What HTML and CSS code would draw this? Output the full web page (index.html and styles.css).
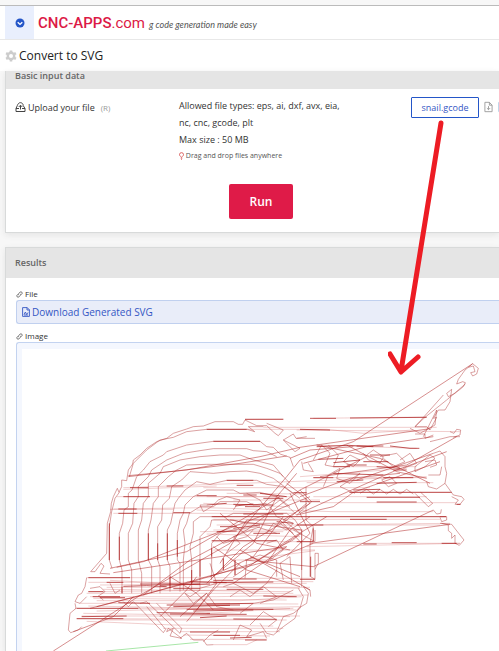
FILE: index.html
```
<!DOCTYPE html>
<html lang="en">
<head>
    <meta charset="UTF-8">
    <meta name="viewport" content="width=device-width, initial-scale=1.0">
    <title>Convert to SVG - CNC-APPS.com</title>
    <link rel="stylesheet" href="styles.css">
</head>
<body>
<header class="topbar">
    <button class="menu-button" type="button" aria-label="Open menu">
        <svg class="menu-icon" viewBox="0 0 10 10"><circle cx="5" cy="5" r="4.5" fill="#2456c8"/><path d="M2.7 4.2 5 6.4 7.3 4.2" fill="none" stroke="#fff" stroke-width="1.4"/></svg>
    </button>
    <a class="logo" href="#"><b>CNC-APPS</b>.com</a>
    <span class="slogan">g code generation made easy</span>
</header>
<div class="title-bar">
    <svg class="gear" viewBox="0 0 12 12"><circle cx="6" cy="6" r="3.2" fill="none" stroke="#ccc" stroke-width="2.4"/><path d="M6 .4v2M6 9.6v2M1.1 3.2l1.8 1M9.1 7.8l1.8 1M1.1 8.8l1.8-1M9.1 4.2l1.8-1" stroke="#ccc" stroke-width="2.6"/></svg>
    <h1>Convert to SVG</h1>
</div>

<main>
    <section class="panel input-panel">
        <h2 class="panel-head">Basic input data</h2>
        <div class="panel-body">
            <div class="upload-row">
                <div class="upload-label">
                    <svg class="upload-icon" viewBox="0 0 11 10"><path d="M1 6.5 2.4 3.4C3 1.3 5-.2 7 1.2c1 .7 1.2 1.4 1.1 2.2L10 6.5v3H1v-3h3M10 6.5H7M5.5 7.5v-4M3.7 5l1.8-1.8L7.3 5" fill="none" stroke="#444"/></svg>
                    Upload your file <small>(R)</small>
                </div>
                <div class="upload-info">
                    <p>Allowed file types: eps, ai, dxf, avx, eia, nc, cnc, gcode, plt</p>
                    <p>Max size : 50 MB</p>
                    <p class="hint"><svg class="pin" viewBox="0 0 6 9"><path d="M3 6C1.5 4.8.6 4 .6 2.7a2.4 2.2 0 0 1 4.8 0C5.4 4 4.5 4.8 3 6ZM2 7h2M2.4 8.4h1.2" fill="none" stroke="#d33a3a" stroke-width=".9"/></svg> Drag and drop files anywhere</p>
                </div>
                <div class="upload-file">
                    <button class="file-button" type="button">snail.gcode</button>
                    <svg class="doc-icon" viewBox="0 0 10 12"><path d="M1 .8h5L9 4v7.2H1ZM6 .8V4h3M5 5v4M3.2 7.2 5 9l1.8-1.8" fill="none" stroke="#999"/></svg>
                    <svg class="doc-icon" viewBox="0 0 10 12"><path d="M1 .8h8v10.4H1Z" fill="none" stroke="#8db2d8"/></svg>
                </div>
            </div>
            <button class="run-button" type="button">Run</button>
        </div>
    </section>

    <section class="panel">
        <h2 class="panel-head results-head">Results</h2>
        <div class="results">
            <h3><svg class="link-icon" viewBox="0 0 8 8"><path d="M3.2 4.8a1.4 1.4 0 0 1 0-2L4.7 1.2a1.5 1.5 0 0 1 2.1 2.1L5.9 4.2M4.8 3.2a1.4 1.4 0 0 1 0 2L3.3 6.8a1.5 1.5 0 0 1-2.1-2.1l.9-.9" fill="none" stroke="#555" stroke-width=".9"/></svg>File</h3>
            <a class="download" href="#">
                <svg class="svg-icon" viewBox="0 0 8 10"><path d="M.6.6h4.6l2.2 2.2v6.6H.6ZM5 .6V3h2.4M2 7.5 3.4 5l1.2 2.5L6 5.5M2 8h4" fill="none" stroke="#3557c4" stroke-width=".9"/></svg>
                Download Generated SVG
            </a>
            <h3><svg class="link-icon" viewBox="0 0 8 8"><path d="M3.2 4.8a1.4 1.4 0 0 1 0-2L4.7 1.2a1.5 1.5 0 0 1 2.1 2.1L5.9 4.2M4.8 3.2a1.4 1.4 0 0 1 0 2L3.3 6.8a1.5 1.5 0 0 1-2.1-2.1l.9-.9" fill="none" stroke="#555" stroke-width=".9"/></svg>Image</h3>
            <div class="image-frame">
                <svg class="drawing" viewBox="66 57 1431 906" role="img" aria-label="Toolpath of snail.gcode">
                    <!-- shell contours -->
                    <g class="contour">
                        <path d="M340 500 352 475 357 487 365 470 365 450 380 452 385 420 398 402 400 390 420 375 440 355 470 335 500 325 520 310 560 297 580 290 610 288 645 275H700L715 283H728L735 270 770 287H800L825 310 835 317 850 300 800 280M340 500 334 520 332 545 322 580 320 670 272 725H285L303 700 312 708 300 730 330 732"/>
                        <path d="M336 715 328 690V590L335 545 345 505 358 487M388 440 400 400 440 360 480 330 520 322 560 305 620 298H742L764 305 745 290H790"/>
                        <path d="M366 790V720L358 690V610L368 580 372 540 385 530V490L396 480 410 440 430 420 450 395 490 375 500 365 560 345 640 334H780L800 350 820 352 840 372 870 382 880 410"/>
                        <path d="M395 790V720L385 690V610L398 580 402 520 415 500V470L445 440 455 420 500 390 550 370 600 362 640 356H740L760 362 800 365 830 380"/>
                        <path d="M425 790V730L415 690V600L425 570 430 520 445 500V460L480 430 490 410 540 390 600 380 660 375H720L760 390 820 405 850 440"/>
                        <path d="M455 790V710L445 690V600L453 570 460 520 475 500V470L505 440 530 420 560 405 620 403H760L800 415 840 430 870 460"/>
                        <path d="M480 790V710L473 690V590L485 570 488 525 508 505 515 470 545 450 570 425 640 430 690 425 740 423 780 430 820 445 880 490"/>
                        <path d="M510 785V710L502 690V600L512 580 525 520 535 505 555 480 590 455 630 463 680 451H770L800 463 850 470 900 505"/>
                        <path d="M540 785V700L532 690V610L540 570 550 550 555 525 580 500 620 480H700L720 490 780 487 830 500 870 530"/>
                        <path d="M550 780V690L555 640 550 600 560 580 568 550 600 530H640L660 515H740L760 525 800 520"/>
                        <path d="M575 780V690L570 650 580 610V575L600 560H680L700 550H860L885 570 905 600V720"/>
                        <path d="M600 780V620L630 590 635 570H700L735 580H840L880 610M635 750V640L660 610 700 600 770 590 830 610M670 720V685M705 735V690M735 745 740 690 780 675 830 690V740M850 750 840 700 870 680 875 760M905 770V600M930 740V640L940 590 918 570V470M945 600V635L880 600M932 740 945 748V670H955V700L945 718"/>
                    </g>
                    <!-- antenna and right edge -->
                    <g class="contour">
                        <path d="M1405 112 1418 101 1435 115 1430 132 1418 138 1412 128 1425 125 1420 108 1405 112 1395 120 1375 148 1370 162 1388 155 1396 158 1390 170 1365 190 1345 200 1340 190 1355 178 1350 215 1335 240 1315 240 1300 265 1310 262 1290 300 1280 290 1245 290 1275 262 1340 210 1396 162M1245 290 1290 240 1330 195M1270 320 1310 240 1305 285 1260 310 1230 295M1245 312H1275V325L1300 315"/>
                        <path d="M1380 320H1350L1290 335M1350 305 1362 310 1370 298 1382 300 1380 315 1360 322M1300 370 1320 363 1335 380V410L1340 430 1335 460 1310 477 1285 470 1280 455M1245 410 1290 375 1305 385 1275 410 1245 425ZM1275 395 1305 390 1310 405 1290 412M1285 435H1320L1325 410M1335 460 1360 495 1385 500 1392 508 1380 523H1365L1375 510 1355 500M1245 490 1285 530 1298 520 1262 487M1300 540 1310 552 1322 550 1324 538M1320 562 1325 575 1340 570V560H1320M1320 580 1355 583 1380 615 1392 630 1378 646 1365 640V615L1355 625V610L1345 602V585L1325 580"/>
                        <path d="M850 330 880 312 888 325H945M850 330 885 365 900 355 870 340ZM890 325 920 320M905 395 910 420 940 425 925 400M940 390 965 345 990 370 975 405 1000 410 1015 375 985 345M970 470 985 435 1020 415 1010 445 1050 460 1080 430 1020 470 1065 490M1100 375 1120 360 1150 380 1140 400 1105 390 1090 370M1140 380 1190 370 1215 395 1180 410 1150 385M1200 390 1230 370 1250 400 1210 415M1050 375 1080 390 1060 410 1030 395ZM1145 450 1170 440 1190 460 1165 470ZM1080 490 1100 478 1120 492 1140 478 1160 492 1180 478 1200 492 1220 478 1240 492"/>
                    </g>
                    <!-- long horizontal moves -->
                    <g class="light">
                        <path d="M735 268 850 267M940 265 1280 261M790 292 1310 292M740 298H980L1090 310 1240 300M890 300 1380 305M610 473H1110M370 473 1280 440M350 500H880M370 478 650 468M340 537 620 533 1000 545H1300M340 550H880M330 538H520M640 560H1340M640 568H1320M650 585H1320M900 585 1350 580M940 640 1380 640M920 650 1380 640M1050 487H1350M940 500H1280M960 518H1370M940 443H1280M920 458H1300M1000 410H1250M950 345 1250 355M900 440 1220 415M635 635H940M600 605H850M620 612 900 620M640 660 945 660M690 690H820M750 688 945 662M700 745H945M260 743H700M265 757H650M300 765 920 760M320 772H930M265 785 720 780M260 790H880M310 778 870 785"/>
                        <path d="M270 800H650L925 795M280 805 860 810M290 812H720L905 800M240 820H690M265 828 890 840M225 835H870M290 843 900 830M250 850 870 860M245 858H900M230 866 780 868M310 870 860 870M260 874 520 885 820 888M490 895H850M540 905H840M550 915 810 918M570 928H800M640 944H740L770 930M620 850 880 835M520 820 895 822M560 755H940M610 520 860 530M620 500H860M680 490 920 492M700 510H960M590 540 760 545M640 600H910M650 770 900 775M330 751 600 765"/>
                    </g>
                    <g class="strong">
                        <path d="M735 268H850M930 265H1008M1050 264 1280 262M620 298H740M900 298 990 300M640 334H780M680 451H760M390 473H445M500 468H550M710 466H760M370 500H450M590 497H650M355 537H410M355 550H412M520 548H570M700 523 820 525M735 530H780M705 528 760 522M635 560H1338M730 552H850M1050 568H1160M890 585H970M635 632H830M890 635H940M1090 642H1130M1175 638H1250M1325 640H1370M1048 487H1355M1130 516H1250M1100 502H1260M940 443H1000M1150 443H1240M1000 410H1050M1090 395H1165M1230 355H1258M1070 348H1150M1180 420H1220M1370 523H1382"/>
                        <path d="M265 743H390M320 757H370M370 769 440 767 500 770M420 762H600M480 766 630 762M570 755 680 758M640 758 820 756M265 785H310M278 800H360M300 803 375 803M355 818 450 820M230 835H415M500 825H720M520 830 690 826M470 848 630 850M510 852 740 853M560 838H820M580 843 760 840M620 822 760 820M600 863 680 858M245 860 380 858M230 866H370M700 867 830 868M570 906H690M640 916H720M690 924 755 922M735 930H800M700 747H770M640 751H700M790 798 890 800M520 776H600M680 778H790M900 748H945"/>
                        <path d="M328 690V580M366 790V770M445 690V610M473 690V640M502 690V610M532 680V630M600 740V690M670 720V685M705 735V690M932 740V680M940 635V595M635 680V655M358 690V620M575 760V720M510 775V740"/>
                    </g>
                    <!-- rapid moves across the figure -->
                    <g class="cross">
                        <path d="M1418 101 1060 335 900 390 860 440 690 640 430 790 160 963M1300 540 940 710M930 640 1350 583M385 437 560 420 780 380 900 352 1290 296M385 440 720 400 860 378M330 715 560 665 690 590 840 500M340 728 660 680 860 650M350 712 430 695 620 620 780 560 930 500M430 795 570 690 740 600 900 480 1100 380M270 835 430 795 620 740 820 690 940 640M220 905 340 860 400 800M290 830 560 760 760 700 905 610M890 555 1000 530 1060 487 1320 395M900 550 1010 500 1190 420 1340 365M960 440 1220 405 1370 320M910 400 1100 350 1300 320M950 345 1140 385 1290 460M1040 345 1190 425 1280 445M1070 450 1300 370M900 500 1050 445 1200 430M870 385 930 360 1060 350"/>
                        <path d="M620 760 730 650 860 570 920 520M640 740 760 640 830 500 890 430M700 740 850 640 980 560M660 700 740 570 840 570 905 640M720 660 930 780M735 690 940 710M750 680 900 740M640 650 740 720 900 770M660 550 770 640 870 660M690 570 905 600M850 560 760 680 630 740M800 700 870 600 930 560M870 490 930 610 860 680M850 570 930 520 900 490 860 460M700 760 860 650M560 875 640 780 720 700M540 860 620 790M590 840 650 760M480 860 560 780 590 740M510 740 590 790 640 840"/>
                    </g>
                    <!-- foot and lower body -->
                    <g class="contour">
                        <path d="M260 743 255 770 245 790 235 795 225 815 240 820 260 800M225 820 228 835 210 850 205 900 212 908 235 900 245 890M270 775 300 770 315 785 295 798 310 810M370 815 385 830 400 815 415 830 490 908 497 898 440 830M420 820 440 815 540 910 545 895 470 820M330 760 345 790 360 780M505 895 545 925 510 918 520 895 500 905ZM540 925 560 910 580 930H610L620 945 640 944M610 935 630 915 655 900M600 780 570 800 555 790 580 820 620 790 650 830 700 840M720 850 760 820 820 810 880 780M780 880 800 910 820 915 850 890 885 865 895 835 920 820 925 790 910 770 930 780 932 800M830 905 850 860 880 850 900 835 910 800 895 775M700 930 720 885 755 900 740 920 790 905 800 925M750 885 790 845 830 870 805 890M690 800 720 780 750 800 790 770 830 800 780 820"/>
                        <path d="M620 525H600L610 545 635 530 655 510 680 500 720 510 700 540M740 490 780 510 800 540 840 510 870 535 890 555 935 515 900 480M810 530 830 560 880 580 860 600 820 580 800 610M650 620 670 640 740 620 760 600M850 570 900 610 880 630 840 650M800 640 830 630 850 660 810 690M630 700 650 760 600 775M670 770 700 760 760 790 800 760 830 720M680 670 720 640 700 620 780 590"/>
                    </g>
                    <g class="strong">
                        <path d="M950 350 1045 346 1120 350M1000 398 1080 390M1110 375H1170M1010 455 1090 450M1000 430 1150 435M1130 460 1250 457M1060 480 1140 478M955 388 1030 385M1170 348 1230 355M1130 410 1200 415M1040 405 1100 405M780 490 860 500M790 505H850M880 488H920M730 495H770M900 515H960M830 575 880 580M660 590H710M760 610H840M700 595 780 585M650 605 710 603M620 525 680 520"/>
                    </g>
                    <path class="travel" d="M318 963 595 937"/>
                </svg>
            </div>
        </div>
    </section>
</main>

<!-- arrow from the file button to the image -->
<svg class="arrow" viewBox="0 0 60 260" aria-hidden="true"><path d="M53 5 13 253M2 236l11 18 17-15" fill="none" stroke="#ed1c24" stroke-width="5" stroke-linecap="round" stroke-linejoin="round"/></svg>
</body>
</html>
```

FILE: styles.css
```
* {
    box-sizing: border-box;
}

body {
    margin: 0;
    padding-top: 5px;
    position: relative;
    background-color: #f7f7f7;
    color: #333;
    font-family: "Open Sans", sans-serif;
    font-size: 9px;
    overflow: hidden;
}

button {
    font-family: inherit;
    cursor: pointer;
}

h1, h2, h3, p {
    margin: 0;
}

a {
    text-decoration: none;
}

svg {
    flex: none;
}

.topbar {
    display: flex;
    align-items: center;
    height: 35px;
    padding-left: 5px;
    background-color: #fff;
    border-top: 1px solid #bbb;
    border-bottom: 1px solid #e8e8e8;
}

.menu-button {
    display: flex;
    align-items: center;
    justify-content: center;
    width: 29px;
    height: 33px;
    padding: 0;
    border: 0;
    background-color: #e9effd;
}

.menu-icon {
    width: 10px;
    height: 10px;
}

.logo {
    margin-left: 4px;
    color: #dc1a46;
    font-family: Roboto, sans-serif;
    font-size: 15px;
}

.logo b {
    font-weight: 500;
}

.slogan {
    margin: 4px 0 0 4px;
    color: #555;
    font-family: Lato, sans-serif;
    font-size: 9px;
    font-style: italic;
}

.title-bar {
    display: flex;
    align-items: center;
    gap: 2px;
    height: 31px;
    padding-left: 5px;
    background-color: #fff;
}

.gear {
    width: 12px;
    height: 12px;
}

h1 {
    color: #222;
    font-size: 12px;
    font-weight: 500;
}

main {
    padding-left: 5px;
}

.panel {
    background-color: #fff;
    border: 1px solid #d8dada;
    border-right: 0;
    box-shadow: 0 2px 6px #e4e4e4;
}

.input-panel {
    margin-bottom: 14px;
    border-top: 0;
}

.panel-head {
    padding: 0 9px 8px;
    background-color: #e5e5e5;
    color: #666;
    font-size: 9px;
    font-weight: 600;
    line-height: 10px;
}

.results-head {
    padding: 10px 9px;
}

.panel-body {
    display: flex;
    flex-direction: column;
    padding: 8px 0 13px 9px;
}

.upload-row {
    display: grid;
    grid-template-columns: 164px 1fr 88px;
}

.upload-label {
    display: flex;
    align-items: center;
    gap: 2px;
    height: 20px;
}

.upload-label small {
    margin-left: 4px;
    color: #999;
    font-size: 8px;
}

.upload-icon {
    width: 11px;
    height: 10px;
}

.upload-info {
    max-width: 164px;
    line-height: 17px;
}

.upload-info .hint {
    color: #555;
    font-size: 7px;
    font-weight: 500;
    line-height: 16px;
}

.pin {
    width: 5px;
    height: 8px;
    vertical-align: middle;
}

.upload-file {
    display: flex;
    align-items: center;
    gap: 5px;
    height: 20px;
}

.file-button {
    flex: none;
    width: 68px;
    height: 21px;
    padding: 0;
    border: 1px solid #2456c8;
    border-radius: 1px;
    background-color: #fff;
    color: #3557c4;
    font-size: 9px;
}

.doc-icon {
    width: 9px;
    height: 12px;
}

.run-button {
    align-self: center;
    width: 64px;
    height: 35px;
    margin: 20px 0 0 8px;
    border: 0;
    border-radius: 2px;
    background-color: #df1b48;
    color: #fff;
    font-size: 12px;
    font-weight: 600;
}

.results {
    padding: 10px 0 0 10px;
}

h3 {
    display: flex;
    align-items: center;
    gap: 2px;
    font-size: 8px;
    font-weight: 500;
    line-height: 12px;
}

.link-icon {
    width: 7px;
    height: 7px;
}

.download {
    display: flex;
    align-items: center;
    gap: 2px;
    height: 24px;
    margin-bottom: 6px;
    padding-left: 5px;
    border: 1px solid #c0d0ef;
    border-right: 0;
    border-radius: 3px 0 0 3px;
    background-color: #e9edf9;
    color: #3557c4;
    font-size: 10px;
}

.svg-icon {
    width: 8px;
    height: 10px;
}

.image-frame {
    padding: 6px 0 0 5px;
    border: 1px solid #c3d3f0;
    border-width: 1px 0 0 1px;
    border-radius: 3px 0 0;
    background-color: #f4f7fe;
}

.drawing {
    display: block;
    width: 100%;
    background-color: #fff;
    fill: none;
    stroke-width: 3;
}

.contour {
    stroke: #b03030;
    stroke-opacity: .45;
}

.light {
    stroke: #c83c3c;
    stroke-opacity: .25;
}

.strong {
    stroke: #a81414;
    stroke-opacity: .7;
}

.cross {
    stroke: #b02020;
    stroke-opacity: .5;
}

.travel {
    stroke: #a8e6a8;
}

.arrow {
    position: absolute;
    top: 118px;
    left: 388px;
    width: 60px;
    height: 260px;
}
```
